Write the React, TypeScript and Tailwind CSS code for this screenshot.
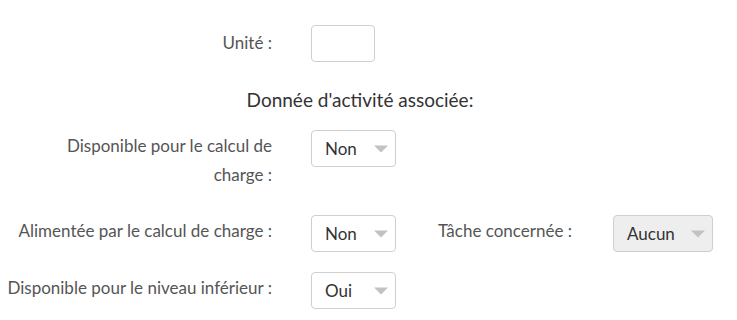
import React from 'react';

function Caret() {
    return (
        <svg width="16" height="8" viewBox="0 0 16 8" className="shrink-0">
            <path d="M1 0.5 L15 0.5 L8 7.5 Z" fill="#c2c2c2" />
        </svg>
    );
}

function Select({ value, width, disabled }: { value: string; width: string; disabled?: boolean }) {
    return (
        <div
            className={`${width} h-[37px] flex items-center justify-between pl-[13px] pr-[6px] border border-[#cfcfcf] rounded-[4px] text-[17px] text-[#333] ${
                disabled ? 'bg-[#eeeeee]' : 'bg-white'
            }`}
        >
            <span>{value}</span>
            <Caret />
        </div>
    );
}

export default function App() {
    return (
        <div className="w-[737px] h-[320px] bg-white pt-[25px] text-[17px] text-[#555]" style={{ fontFamily: 'Lato, "Open Sans", sans-serif' }}>
            {/* Unité */}
            <div className="flex items-center">
                <label className="w-[272px] text-right pb-[2px]">Unité :</label>
                <div className="ml-[39px] w-[64px] h-[37px] border border-[#cfcfcf] rounded-[4px] bg-white" />
            </div>

            {/* section title */}
            <div className="w-[720px] mt-[26px] flex justify-center">
                <h3 className="text-[19px] leading-[24px] text-[#333]">Donnée d'activité associée:</h3>
            </div>

            {/* Disponible pour le calcul de charge */}
            <div className="flex items-start mt-[18px]">
                <label className="w-[272px] text-right leading-[29px] pt-[1px]">
                    Disponible pour le calcul de
                    <br />
                    charge :
                </label>
                <div className="ml-[39px]">
                    <Select value="Non" width="w-[85px]" />
                </div>
            </div>

            {/* Alimentée par le calcul de charge */}
            <div className="flex items-start mt-[26px]">
                <label className="w-[272px] text-right leading-[29px] pt-[1px]">Alimentée par le calcul de charge :</label>
                <div className="ml-[39px]">
                    <Select value="Non" width="w-[85px]" />
                </div>
                <label className="w-[217px] text-right pr-[41px] leading-[29px] pt-[1px]">Tâche concernée :</label>
                <Select value="Aucun" width="w-[100px]" disabled />
            </div>

            {/* Disponible pour le niveau inférieur */}
            <div className="flex items-start mt-[20px]">
                <label className="w-[272px] text-right leading-[29px] pt-[1px]">Disponible pour le niveau inférieur :</label>
                <div className="ml-[39px]">
                    <Select value="Oui" width="w-[85px]" />
                </div>
            </div>
        </div>
    );
}
